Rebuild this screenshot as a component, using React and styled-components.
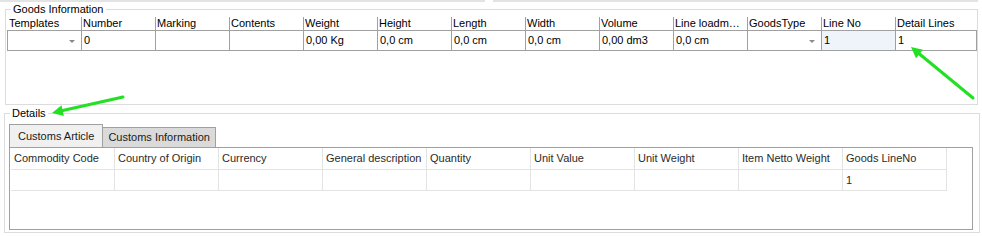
import React from "react";
import styled, { createGlobalStyle } from "styled-components";

const GlobalStyle = createGlobalStyle`
  html, body {
    margin: 0;
    padding: 0;
    background: #ffffff;
  }
  body {
    font-family: "Liberation Sans", Arial, sans-serif;
    font-size: 11px;
    color: #000000;
  }
`;

const goodsColumns = [
  { label: "Templates", value: "", dropdown: true },
  { label: "Number", value: "0" },
  { label: "Marking", value: "" },
  { label: "Contents", value: "" },
  { label: "Weight", value: "0,00 Kg" },
  { label: "Height", value: "0,0 cm" },
  { label: "Length", value: "0,0 cm" },
  { label: "Width", value: "0,0 cm" },
  { label: "Volume", value: "0,00 dm3" },
  { label: "Line loadm…", value: "0,0 cm" },
  { label: "GoodsType", value: "", dropdown: true },
  { label: "Line No", value: "1", readOnly: true },
  { label: "Detail Lines", value: "1" },
];

const detailColumns = [
  { label: "Commodity Code", value: "" },
  { label: "Country of Origin", value: "" },
  { label: "Currency", value: "" },
  { label: "General description", value: "" },
  { label: "Quantity", value: "" },
  { label: "Unit Value", value: "" },
  { label: "Unit Weight", value: "" },
  { label: "Item Netto Weight", value: "" },
  { label: "Goods LineNo", value: "1" },
];

const Arrow = ({ tail, tip }) => {
  const dx = tip[0] - tail[0];
  const dy = tip[1] - tail[1];
  const len = Math.hypot(dx, dy);
  const ux = dx / len;
  const uy = dy / len;
  const bx = tip[0] - ux * 11;
  const by = tip[1] - uy * 11;
  const px = -uy * 5.5;
  const py = ux * 5.5;
  return (
    <g>
      <line x1={tail[0]} y1={tail[1]} x2={bx} y2={by} stroke="#22e022" strokeWidth="3" strokeLinecap="round" />
      <polygon points={`${tip[0]},${tip[1]} ${bx + px},${by + py} ${bx - px},${by - py}`} fill="#22e022" />
    </g>
  );
};

export default function App() {
  return (
    <>
      <GlobalStyle />
      <Page>
        <TopStrip>
          <TopPanel />
          <TopPanel $last />
        </TopStrip>

        <GroupBox $ml={5} $mr={4}>
          <Legend>Goods Information</Legend>
          <GoodsBody>
            <GoodsHeader>
              {goodsColumns.map((c) => (
                <GoodsHeadCell key={c.label}>{c.label}</GoodsHeadCell>
              ))}
            </GoodsHeader>
            <GoodsRow>
              {goodsColumns.map((c) => (
                <GoodsCell key={c.label} $readOnly={c.readOnly}>
                  <span>{c.value}</span>
                  {c.dropdown && <DropArrow />}
                </GoodsCell>
              ))}
            </GoodsRow>
          </GoodsBody>
        </GroupBox>

        <GroupBox $ml={4} $mr={2} $mt={2}>
          <Legend>Details</Legend>
          <DetailsBody>
            <TabBar>
              <Tab $active>Customs Article</Tab>
              <Tab>Customs Information</Tab>
            </TabBar>
            <TabPanel>
              <DetailGrid>
                {detailColumns.map((c) => (
                  <DetailHeadCell key={c.label}>{c.label}</DetailHeadCell>
                ))}
                {detailColumns.map((c) => (
                  <DetailCell key={c.label}>{c.value}</DetailCell>
                ))}
              </DetailGrid>
            </TabPanel>
          </DetailsBody>
        </GroupBox>

        <Annotations viewBox="0 0 982 237" width="982" height="237">
          <Arrow tail={[123, 97]} tip={[52, 113]} />
          <Arrow tail={[973, 98]} tip={[911, 47]} />
        </Annotations>
      </Page>
    </>
  );
}

const Page = styled.div`
  position: relative;
  width: 982px;
  height: 237px;
  overflow: hidden;
`;

const TopStrip = styled.div`
  display: flex;
  gap: 8px;
  height: 2px;
  padding-right: 4px;
`;

const TopPanel = styled.div`
  flex: 1;
  background: #e3e3e3;
`;

const GroupBox = styled.fieldset`
  margin: ${(p) => p.$mt || 1}px ${(p) => p.$mr}px 0 ${(p) => p.$ml}px;
  padding: 0;
  border: 1px solid #dcdcdc;
  min-width: 0;
`;

const Legend = styled.legend`
  margin-left: 5px;
  padding: 0 2px;
  font-size: 11px;
  line-height: 13px;
  color: #000000;
`;

const GoodsBody = styled.div`
  height: 88px;
  padding: 1px 0 0 1px;
  box-sizing: border-box;
`;

const columns = "73px repeat(11, 74px) 81px";

const GoodsHeader = styled.div`
  display: grid;
  grid-template-columns: ${columns};
  width: 970px;
  box-sizing: border-box;
  border: 0 solid transparent;
  border-width: 0 1px;
  height: 13px;
`;

const GoodsHeadCell = styled.div`
  padding-left: 1px;
  line-height: 13px;
  white-space: nowrap;
  overflow: hidden;
  border-left: 1px solid #a0a0a0;
  &:first-child {
    border-left: 0;
  }
`;

const GoodsRow = styled.div`
  display: grid;
  grid-template-columns: ${columns};
  width: 970px;
  box-sizing: border-box;
  border: 1px solid #a0a0a0;
  height: 21px;
`;

const GoodsCell = styled.div`
  display: flex;
  align-items: center;
  justify-content: space-between;
  padding: 0 6px 0 2px;
  line-height: 19px;
  white-space: nowrap;
  background: ${(p) => (p.$readOnly ? "#eff4fa" : "#ffffff")};
  border-left: 1px solid #a0a0a0;
  &:first-child {
    border-left: 0;
  }
`;

const DropArrow = styled.span`
  width: 0;
  height: 0;
  border-left: 3px solid transparent;
  border-right: 3px solid transparent;
  border-top: 3px solid #8a8a8a;
  margin-top: 1px;
`;

const DetailsBody = styled.div`
  padding: 4px 6px 2px 4px;
  font-family: "Liberation Sans", Arial, sans-serif;
  font-size: 11px;
`;

const TabBar = styled.div`
  display: flex;
  align-items: flex-end;
  height: 23px;
`;

const Tab = styled.div`
  box-sizing: border-box;
  height: ${(p) => (p.$active ? 23 : 20)}px;
  padding: 0 ${(p) => (p.$active ? 8 : 5)}px;
  line-height: ${(p) => (p.$active ? 22 : 19)}px;
  background: ${(p) => (p.$active ? "#f0f0f0" : "#dadada")};
  border: 1px solid #a0a0a0;
  border-bottom: 0;
  border-left-width: ${(p) => (p.$active ? 1 : 0)}px;
  color: #1a1a1a;
  white-space: nowrap;
`;

const TabPanel = styled.div`
  height: 83px;
  box-sizing: border-box;
  border: 1px solid #a0a0a0;
  padding-left: 1px;
  background: #ffffff;
`;

const DetailGrid = styled.div`
  display: grid;
  grid-template-columns: repeat(9, 104px);
  grid-template-rows: 22px 21px;
  width: 936px;
`;

const DetailHeadCell = styled.div`
  box-sizing: border-box;
  padding-left: 3px;
  line-height: 21px;
  border-right: 1px solid #e3e3e3;
  border-bottom: 1px solid #e3e3e3;
  color: #2b2b2b;
  white-space: nowrap;
  overflow: hidden;
`;

const DetailCell = styled(DetailHeadCell)`
  line-height: 20px;
`;

const Annotations = styled.svg`
  position: absolute;
  left: 0;
  top: 0;
  pointer-events: none;
`;
